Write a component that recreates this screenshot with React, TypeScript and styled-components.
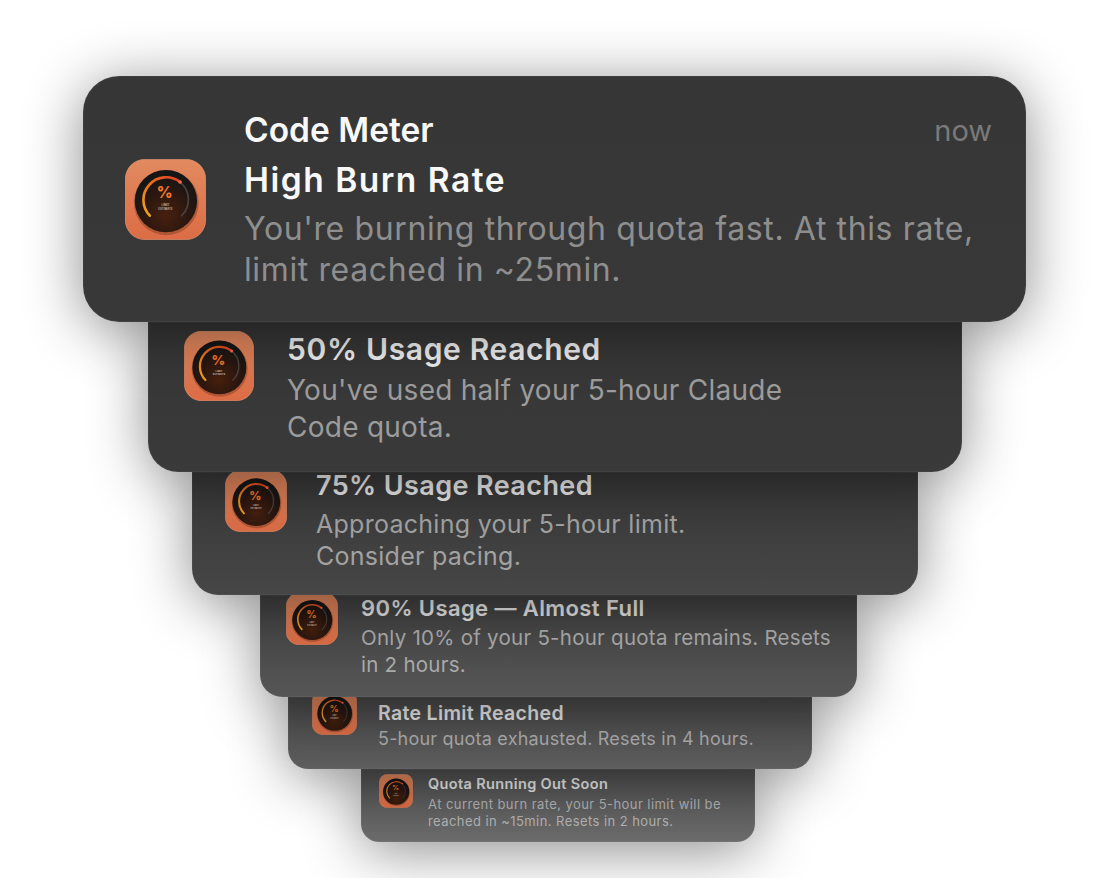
import React, { useId } from "react";
import styled, { createGlobalStyle } from "styled-components";

const Global = createGlobalStyle`
  html, body { margin: 0; padding: 0; background: #fff; }
  body { width: 1111px; height: 878px; overflow: hidden; font-family: Inter, "Noto Sans", sans-serif; -webkit-font-smoothing: antialiased; }
`;

const Stack = styled.main`
  display: flex;
  flex-direction: column;
  align-items: flex-start;
  padding-top: 76px;
  width: 1111px;
  height: 878px;
  box-sizing: border-box;
`;

const Card = styled.section<{ $x: number; $w: number; $h: number; $z: number; $r: number; $from: string; $to: string; $pl: number; $gap: number; $first?: boolean }>`
  position: relative;
  z-index: ${(p) => p.$z};
  display: flex;
  align-items: flex-start;
  gap: ${(p) => p.$gap}px;
  box-sizing: border-box;
  margin-left: ${(p) => p.$x}px;
  width: ${(p) => p.$w}px;
  height: ${(p) => p.$h}px;
  padding-left: ${(p) => p.$pl}px;
  border-radius: ${(p) => (p.$first ? `${p.$r}px` : `0 0 ${p.$r}px ${p.$r}px`)};
  background: linear-gradient(180deg, ${(p) => p.$from}, ${(p) => p.$to});
  box-shadow: inset 0 0 0 1px rgba(255, 255, 255, 0.045), 0 8px 58px rgba(0, 0, 0, 0.46);
`;

const IconBox = styled.div<{ $size: number; $top: number }>`
  flex: none;
  width: ${(p) => p.$size}px;
  height: ${(p) => p.$size}px;
  margin-top: ${(p) => p.$top}px;
  svg { display: block; width: 100%; height: 100%; }
`;

const TextCol = styled.div<{ $top: number }>`
  flex: 1;
  min-width: 0;
  margin-top: ${(p) => p.$top}px;
`;

const HeaderRow = styled.div`
  display: flex;
  justify-content: space-between;
  padding-right: 34px;
`;

const Title = styled.div<{ $size: number; $lh: number; $color: string; $ls: number }>`
  font-size: ${(p) => p.$size}px;
  line-height: ${(p) => p.$lh}px;
  font-weight: 600;
  letter-spacing: ${(p) => p.$ls}px;
  color: ${(p) => p.$color};
  white-space: nowrap;
`;

const Now = styled.div`
  font-size: 29px;
  line-height: 50px;
  font-weight: 400;
  color: #7a7a7a;
`;

const Body = styled.div<{ $size: number; $lh: number; $color: string; $ls: number; $top: number }>`
  margin-top: ${(p) => p.$top}px;
  font-size: ${(p) => p.$size}px;
  line-height: ${(p) => p.$lh}px;
  font-weight: 400;
  letter-spacing: ${(p) => p.$ls}px;
  color: ${(p) => p.$color};
  white-space: pre-line;
`;

function AppIcon() {
  const id = useId().replace(/[^a-zA-Z0-9]/g, "");
  return (
    <svg viewBox="0 0 100 100">
      <defs>
        <linearGradient id={`${id}bg`} x1="0" y1="0" x2="0" y2="1">
          <stop offset="0" stopColor="#e28a60" />
          <stop offset="1" stopColor="#dc6c45" />
        </linearGradient>
        <radialGradient id={`${id}disc`} cx="0.5" cy="0.72" r="0.62">
          <stop offset="0" stopColor="#48200e" />
          <stop offset="0.6" stopColor="#2a1710" />
          <stop offset="1" stopColor="#161616" />
        </radialGradient>
        <linearGradient id={`${id}arc`} x1="0" y1="1" x2="1" y2="0">
          <stop offset="0" stopColor="#f0a820" />
          <stop offset="0.5" stopColor="#e8701f" />
          <stop offset="1" stopColor="#e23c22" />
        </linearGradient>
      </defs>
      <rect x="0.5" y="0.5" width="99" height="99" rx="24" fill={`url(#${id}bg)`} stroke="#eb9d78" strokeWidth="0.8" />
      <circle cx="51" cy="54" r="40" fill="#8d4325" opacity="0.55" />
      <circle cx="50.5" cy="52" r="38.5" fill={`url(#${id}disc)`} />
      <path d="M 68 28.5 A 28 28 0 0 1 70 70" fill="none" stroke="#4a3f3a" strokeWidth="2.2" strokeLinecap="round" />
      <path d="M 30.6 70 A 28 28 0 0 1 68 28.5" fill="none" stroke={`url(#${id}arc)`} strokeWidth="3.2" strokeLinecap="round" />
      <circle cx="68" cy="28.5" r="2.2" fill="#f4694a" />
      <text x="49" y="48" textAnchor="middle" fontFamily="Inter, sans-serif" fontWeight="800" fontSize="19" fill="#f0762c">%</text>
      <text x="50" y="58" textAnchor="middle" fontFamily="Inter, sans-serif" fontWeight="600" fontSize="3.6" fill="#c9bdb5">LIMIT</text>
      <text x="50" y="63.5" textAnchor="middle" fontFamily="Inter, sans-serif" fontWeight="600" fontSize="3.6" fill="#c9bdb5">ESTIMATE</text>
    </svg>
  );
}

const cards = [
  { title: "High Burn Rate", body: "You're burning through quota fast. At this rate,\nlimit reached in ~25min.", x: 83, w: 943, h: 246, r: 36, from: "#363636", to: "#383838", pl: 42, gap: 38, icon: 81, iconTop: 83, textTop: 30, ts: 33.5, tl: 49, ts2: 32, bl: 41, ls: 1.5, bls: 0.62, bt: 3, tc: "#f8f8f8", bc: "#8e8e8e" },
  { title: "50% Usage Reached", body: "You've used half your 5-hour Claude\nCode quota.", x: 148, w: 814, h: 150, r: 30, from: "#363636", to: "#3a3a3a", pl: 36, gap: 33, icon: 70, iconTop: 9, textTop: 8, ts: 30, tl: 38, ts2: 28, bl: 37, ls: 0.65, bls: 0.26, bt: 4, tc: "#eeeeee", bc: "#9c9c9c" },
  { title: "75% Usage Reached", body: "Approaching your 5-hour limit.\nConsider pacing.", x: 192, w: 726, h: 123, r: 26, from: "#383838", to: "#464646", pl: 33, gap: 29, icon: 62, iconTop: -2, textTop: -2, ts: 27, tl: 32, ts2: 25, bl: 32, ls: 0.4, bls: 0.27, bt: 6, tc: "#ebebeb", bc: "#a2a2a2" },
  { title: "90% Usage — Almost Full", body: "Only 10% of your 5-hour quota remains. Resets\nin 2 hours.", x: 260, w: 597, h: 102, r: 22, from: "#404040", to: "#565656", pl: 26, gap: 23, icon: 52, iconTop: -2, textTop: 0, ts: 22, tl: 26, ts2: 20.5, bl: 27, ls: 0.4, bls: 0.26, bt: 3, tc: "#e6e6e6", bc: "#aaaaaa" },
  { title: "Rate Limit Reached", body: "5-hour quota exhausted. Resets in 4 hours.", x: 288, w: 524, h: 72, r: 20, from: "#484848", to: "#5e5e5e", pl: 24, gap: 21, icon: 45, iconTop: -7, textTop: 5, ts: 19.5, tl: 23, ts2: 18, bl: 28, ls: 0.33, bls: 0.2, bt: 0, tc: "#e6e6e6", bc: "#aaaaaa" },
  { title: "Quota Running Out Soon", body: "At current burn rate, your 5-hour limit will be\nreached in ~15min. Resets in 2 hours.", x: 361, w: 394, h: 73, r: 18, from: "#505050", to: "#6c6c6c", pl: 18, gap: 15, icon: 34, iconTop: 5, textTop: 5, ts: 14.5, tl: 20, ts2: 13, bl: 17, ls: 0.36, bls: 0.43, bt: 2, tc: "#e8e8e8", bc: "#b2b2b2" },
];

export default function App() {
  return (
    <>
      <Global />
      <Stack>
        {cards.map((c, i) => (
          <Card key={c.title} $x={c.x} $w={c.w} $h={c.h} $z={10 - i} $r={c.r} $from={c.from} $to={c.to} $pl={c.pl} $gap={c.gap} $first={i === 0}>
            <IconBox $size={c.icon} $top={c.iconTop}>
              <AppIcon />
            </IconBox>
            <TextCol $top={c.textTop}>
              {i === 0 && (
                <HeaderRow>
                  <Title $size={c.ts} $lh={c.tl} $color={c.tc} $ls={0}>Code Meter</Title>
                  <Now>now</Now>
                </HeaderRow>
              )}
              <Title $size={c.ts} $lh={c.tl} $color={c.tc} $ls={c.ls}>{c.title}</Title>
              <Body $size={c.ts2} $lh={c.bl} $color={c.bc} $ls={c.bls} $top={c.bt}>{c.body}</Body>
            </TextCol>
          </Card>
        ))}
      </Stack>
    </>
  );
}
